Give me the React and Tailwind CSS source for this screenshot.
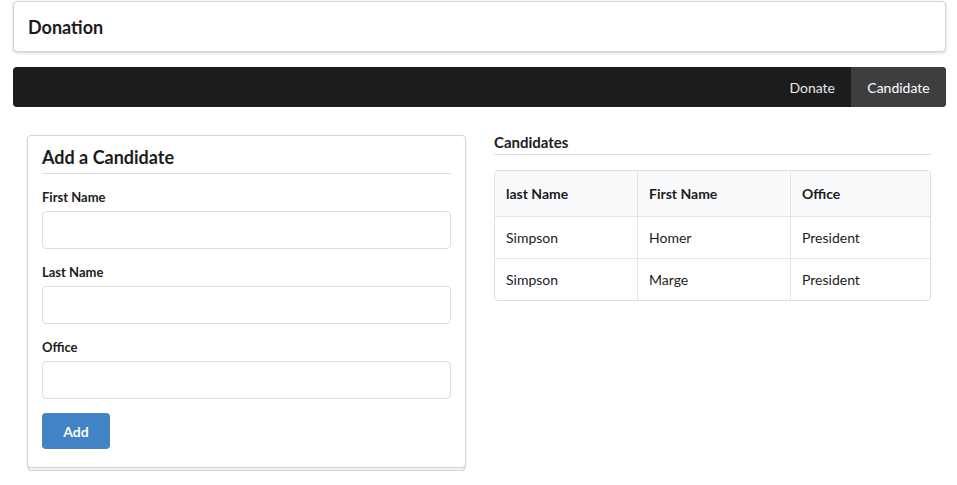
export default function App() {
  const candidates = [
    { last: 'Simpson', first: 'Homer', office: 'President' },
    { last: 'Simpson', first: 'Marge', office: 'President' },
  ]

  return (
    <div className="min-h-[485px] bg-white pl-[13px] pr-[11px] pt-px text-[14px] text-[#1b1c1d]" style={{ fontFamily: 'Lato, "Noto Sans", sans-serif' }}>
      <div className="h-[51px] rounded-[4px] border border-[#d4d4d5] bg-white px-[14px] shadow-[0_1px_3px_0_rgba(34,36,38,0.2)] flex items-center">
        <h1 className="text-[18px] font-bold leading-none text-[#1b1c1d]">Donation</h1>
      </div>

      <nav className="mt-[15px] flex h-[40px] justify-end overflow-hidden rounded-[4px] bg-[#1b1c1d]">
        <a className="flex items-center px-[16px] text-[14px] text-white/90">Donate</a>
        <a className="flex w-[95px] items-center justify-center bg-[#3d3e3f] text-[14px] text-white">Candidate</a>
      </nav>

      <div className="mt-[28px] flex gap-[28px] pl-[14px] pr-[15px]">
        <div className="w-[439px] shrink-0">
          <div className="rounded-[4px] border border-[#d4d4d5] bg-white px-[14px] pb-[18px] pt-[10px] shadow-[0_2px_2px_0_rgba(34,36,38,0.15)]">
            <h2 className="border-b border-[#dededf] pb-[5px] text-[18px] font-bold leading-[22px]">Add a Candidate</h2>
            <form className="mt-[14px] flex flex-col">
              {['First Name', 'Last Name', 'Office'].map((label) => (
                <div key={label} className="mb-[14px]">
                  <label className="mb-[5px] block text-[13px] font-bold leading-[18px]">{label}</label>
                  <input className="block h-[38px] w-full rounded-[4px] border border-[#dededf] bg-white px-[14px] outline-none" />
                </div>
              ))}
              <button type="button" className="h-[36px] w-[68px] rounded-[4px] bg-[#4183c4] text-[14px] font-bold text-white">Add</button>
            </form>
          </div>
          <div className="mx-px h-[3px] rounded-b-[4px] border-x border-b border-[#d4d4d5] bg-[#f3f3f3]"></div>
        </div>

        <div className="flex-1">
          <h3 className="border-b border-[#dededf] pb-[4px] text-[15px] font-bold leading-[15px]">Candidates</h3>
          <table className="mt-[15px] w-full border-separate border-spacing-0 overflow-hidden rounded-[4px] border border-[#dededf] text-left">
            <thead>
              <tr className="bg-[#f9fafb]">
                <th className="h-[45px] w-[143px] border-r border-[#e5e5e5] px-[11px] font-bold">last Name</th>
                <th className="h-[45px] w-[153px] border-r border-[#e5e5e5] px-[11px] font-bold">First Name</th>
                <th className="h-[45px] px-[11px] font-bold">Office</th>
              </tr>
            </thead>
            <tbody>
              {candidates.map((c) => (
                <tr key={c.first}>
                  <td className="h-[42px] border-r border-t border-[#e5e5e5] px-[11px]">{c.last}</td>
                  <td className="h-[42px] border-r border-t border-[#e5e5e5] px-[11px]">{c.first}</td>
                  <td className="h-[42px] border-t border-[#e5e5e5] px-[11px]">{c.office}</td>
                </tr>
              ))}
            </tbody>
          </table>
        </div>
      </div>
    </div>
  )
}
